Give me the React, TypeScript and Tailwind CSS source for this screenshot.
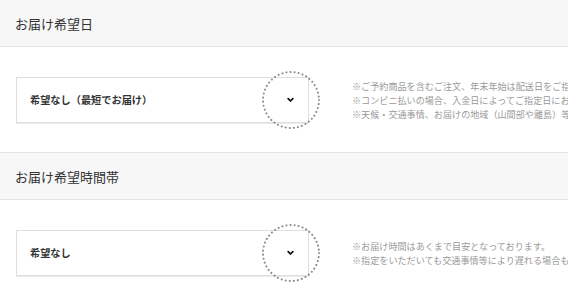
import React from 'react'

const font = { fontFamily: '"Noto Sans CJK JP", "Noto Sans", sans-serif' }

interface SectionProps {
  title: string
  value: string
  notes: string[]
  topBorder?: boolean
}

function Chevron() {
  return (
    <svg viewBox="0 0 8 6" className="w-[7px] h-[5px]" aria-hidden="true">
      <path d="M1.2 1.3L4 4.2l2.8-2.9" fill="none" stroke="#111" strokeWidth="2.1" strokeLinecap="round" strokeLinejoin="round" />
    </svg>
  )
}

function Section({ title, value, notes, topBorder }: SectionProps) {
  return (
    <section>
      <div
        className={`h-[47px] bg-[#f7f7f7] border-b border-[#e3e3e3] flex items-center pl-[15px] ${topBorder ? 'border-t h-[48px]' : ''}`}
      >
        <h2 className="text-[13px] text-[#333] leading-none">{title}</h2>
      </div>
      <div className="flex items-center pl-[16px] pt-[30px] pb-[29px]">
        <div className="relative shrink-0 w-[293px] h-[46px] border border-[#dedede] bg-white flex items-center pl-[13px] shadow-[0_1px_0_#ececec]">
          <span className="text-[10.2px] font-bold text-[#333]">{value}</span>
          <div className="absolute right-[14px] top-1/2 -translate-y-1/2 flex">
            <Chevron />
          </div>
          <svg
            viewBox="0 0 60 60"
            className="absolute w-[60px] h-[60px] left-[244px] top-[-8px] pointer-events-none"
            aria-hidden="true"
          >
            <circle cx="30" cy="30" r="28" fill="none" stroke="#8a8a8a" strokeWidth="2" strokeDasharray="0.1 4" strokeLinecap="round" />
          </svg>
        </div>
        <div className="ml-[43px] whitespace-nowrap text-[9.1px] leading-[14px] text-[#9a9a9a]">
          {notes.map(n => (
            <p key={n}>{n}</p>
          ))}
        </div>
      </div>
    </section>
  )
}

export default function App() {
  return (
    <div className="w-[568px] h-[282px] overflow-hidden bg-white" style={font}>
      <Section
        title="お届け希望日"
        value="希望なし（最短でお届け）"
        notes={[
          '※ご予約商品を含むご注文、年末年始は配送日をご指定いただけません。',
          '※コンビニ払いの場合、入金日によってご指定日にお届けできない場合があります。',
          '※天候・交通事情、お届けの地域（山間部や離島）等によりお届けが遅れる場合があります。',
        ]}
      />
      <Section
        topBorder
        title="お届け希望時間帯"
        value="希望なし"
        notes={[
          '※お届け時間はあくまで目安となっております。',
          '※指定をいただいても交通事情等により遅れる場合もございます。',
        ]}
      />
    </div>
  )
}
